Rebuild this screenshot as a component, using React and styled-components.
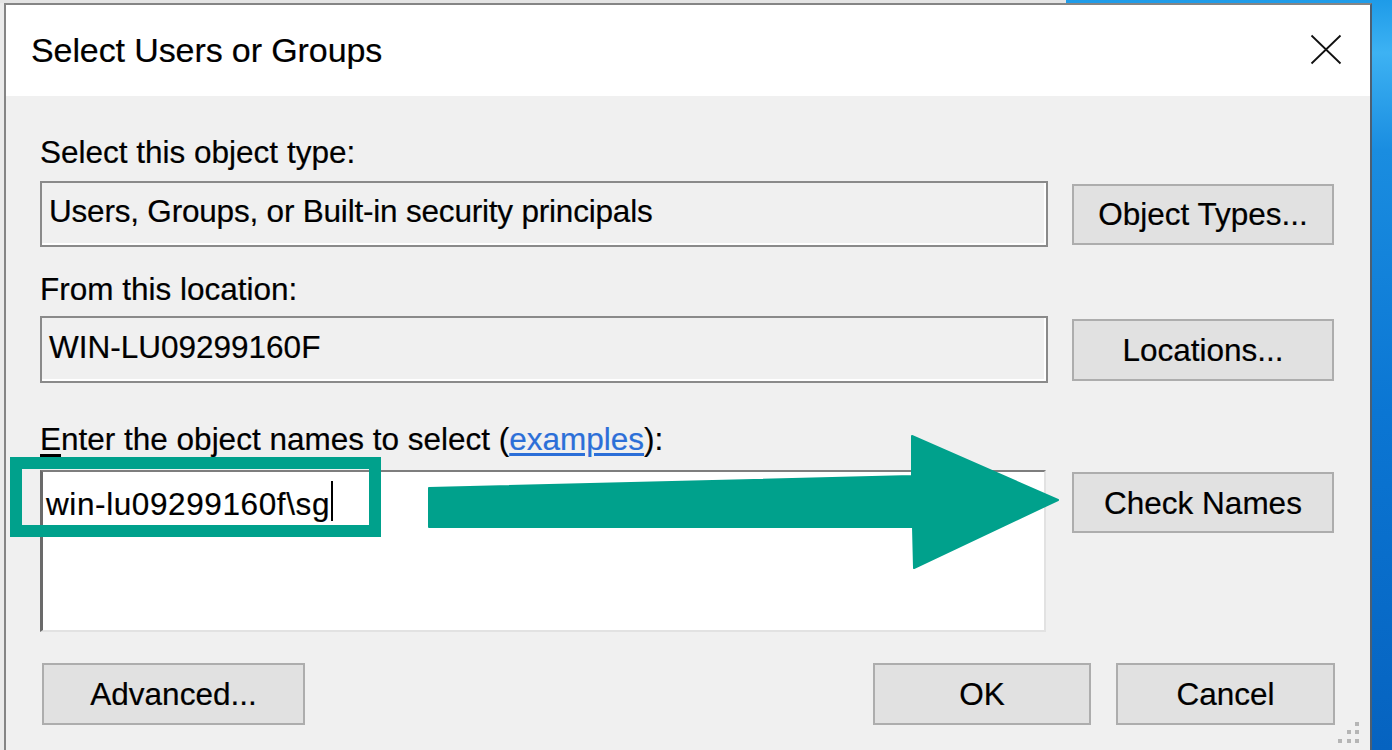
import React from 'react';
import styled, { createGlobalStyle } from 'styled-components';

const Global = createGlobalStyle`
  html, body { margin: 0; padding: 0; }
  body {
    width: 1392px;
    height: 750px;
    overflow: hidden;
    font-family: "Liberation Sans", Arial, sans-serif;
    color: #000;
  }
`;

const Page = styled.div`
  position: relative;
  width: 1392px;
  height: 750px;
  overflow: hidden;
  display: flex;
  flex-direction: column;
  background: linear-gradient(180deg, #1e9be8 0%, #3db2f3 7%, #1a8de0 20%, #0b76d3 55%, #0663c0 100%);
`;

const TopStrip = styled.div`
  display: flex;
  height: 3px;
  flex: none;
`;

const TopGrey = styled.div`
  width: 1066px;
  background: #e4e4e4;
`;

const Main = styled.div`
  flex: 1;
  display: flex;
  min-height: 0;
`;

const Gutter = styled.div`
  width: 4px;
  flex: none;
  background: #ebebeb;
`;

const Dialog = styled.div`
  position: relative;
  width: 1368px;
  flex: none;
  box-sizing: border-box;
  border: 2px solid #858585;
  border-bottom: none;
  border-right-color: #4d5f72;
  display: flex;
  flex-direction: column;
  background: #f0f0f0;
`;

const TitleBar = styled.div`
  height: 91px;
  flex: none;
  display: flex;
  align-items: center;
  justify-content: space-between;
  padding: 0 28px 0 25px;
  background: #fff;
`;

const Title = styled.div`
  font-size: 34px;
  line-height: 39px;
  letter-spacing: -0.1px;
  -webkit-text-stroke: 0.2px #000;
`;

const CloseIcon = styled.svg`
  width: 32px;
  height: 31px;
  margin-top: -3px;
  display: block;
`;

const Body = styled.div`
  flex: 1;
  padding: 38px 36px 0 34px;
  font-size: 31.5px;
  line-height: 36px;
  -webkit-text-stroke: 0.2px #000;
`;

const Label = styled.div`
  margin-top: ${p => p.$mt || 0}px;
  white-space: nowrap;
`;

const Accel = styled.span`
  text-decoration: underline;
  text-underline-offset: 4px;
`;

const Link = styled.span`
  color: #2c6fd8;
  -webkit-text-stroke: 0.2px #2c6fd8;
  text-decoration: underline;
  text-underline-offset: 3px;
`;

const FieldRow = styled.div`
  display: flex;
  align-items: ${p => p.$align || 'center'};
  gap: 24px;
  margin-top: ${p => p.$mt || 0}px;
`;

const ReadOnlyBox = styled.div`
  box-sizing: border-box;
  width: 1008px;
  height: ${p => p.$h}px;
  border: 2px solid #8a8a8a;
  box-shadow: inset -2px -2px 0 #ffffff;
  background: #f0f0f0;
  padding: ${p => p.$pt}px 7px 0 7px;
  letter-spacing: ${p => p.$ls || 0}px;
  white-space: nowrap;
`;

const NamesBox = styled.div`
  box-sizing: border-box;
  width: 1006px;
  height: 162px;
  background: #fff;
  border-top: 2px solid #7e7e7e;
  border-left: 3px solid #6a6a6a;
  border-right: 2px solid #e2e2e2;
  border-bottom: 2px solid #e2e2e2;
  padding: 9px 4px 0 3px;
  letter-spacing: 0.6px;
  white-space: nowrap;
`;

const Caret = styled.span`
  display: inline-block;
  width: 2px;
  height: 40px;
  background: #000;
  vertical-align: -6px;
  margin-left: 1px;
`;

const Button = styled.button`
  box-sizing: border-box;
  width: ${p => p.$w}px;
  height: ${p => p.$h || 61}px;
  margin-top: ${p => p.$mt || 0}px;
  margin-left: ${p => p.$ml || 0}px;
  flex: none;
  padding: 0;
  background: #e1e1e1;
  border: 2px solid #adadad;
  border-radius: 0;
  font-family: inherit;
  font-size: 31.5px;
  line-height: 36px;
  color: #000;
  -webkit-text-stroke: 0.2px #000;
  display: flex;
  align-items: center;
  justify-content: center;
`;

const Footer = styled.div`
  display: flex;
  align-items: center;
  margin-top: 31px;
`;

const Spacer = styled.div`
  flex: 1;
`;

const ButtonGroup = styled.div`
  display: flex;
  gap: 25px;
  margin-right: -1px;
`;

const Grip = styled.svg`
  position: absolute;
  right: 9px;
  bottom: 4px;
  width: 24px;
  height: 24px;
`;

const Highlight = styled.div`
  position: absolute;
  left: 10px;
  top: 457px;
  width: 371px;
  height: 80px;
  box-sizing: border-box;
  border: 12px solid #00a18c;
  pointer-events: none;
`;

const ArrowOverlay = styled.svg`
  position: absolute;
  left: 0;
  top: 0;
  width: 1392px;
  height: 750px;
  pointer-events: none;
`;

export default function App() {
  return (
    <>
      <Global />
      <Page>
        <TopStrip>
          <TopGrey />
        </TopStrip>
        <Main>
          <Gutter />
          <Dialog>
            <TitleBar>
              <Title>Select Users or Groups</Title>
              <CloseIcon viewBox="0 0 32 31">
                <path d="M1.5 1.5 L30.5 29.5 M30.5 1.5 L1.5 29.5" stroke="#111" strokeWidth="1.8" fill="none" />
              </CloseIcon>
            </TitleBar>
            <Body>
              <Label>Select this object type:</Label>
              <FieldRow $mt={11}>
                <ReadOnlyBox $h={66} $pt={10} $ls={-0.2}>Users, Groups, or Built-in security principals</ReadOnlyBox>
                <Button $w={262} $h={61}>Object Types...</Button>
              </FieldRow>

              <Label $mt={24}>From this location:</Label>
              <FieldRow $mt={9}>
                <ReadOnlyBox $h={67} $pt={11}>WIN-LU09299160F</ReadOnlyBox>
                <Button $w={262} $h={62}>Locations...</Button>
              </FieldRow>

              <Label $mt={38}>
                <Accel>E</Accel>nter the object names to select (<Link>examples</Link>):
              </Label>
              <FieldRow $mt={13} $align="flex-start">
                <NamesBox>
                  win-lu09299160f\sg<Caret />
                </NamesBox>
                <Button $w={262} $h={61} $mt={2} $ml={2}>Check Names</Button>
              </FieldRow>

              <Footer>
                <Button $w={263} $h={62} $ml={2}>Advanced...</Button>
                <Spacer />
                <ButtonGroup>
                  <Button $w={218} $h={62}>OK</Button>
                  <Button $w={219} $h={62}>Cancel</Button>
                </ButtonGroup>
              </Footer>
            </Body>
            <Grip viewBox="0 0 24 24">
              <g fill="#b5b5b5">
                <rect x="18" y="0" width="4" height="4" />
                <rect x="10" y="8" width="4" height="4" />
                <rect x="18" y="8" width="4" height="4" />
                <rect x="1" y="17" width="4" height="4" />
                <rect x="10" y="17" width="4" height="4" />
                <rect x="18" y="17" width="4" height="4" />
              </g>
            </Grip>
          </Dialog>
        </Main>
        <Highlight />
        <ArrowOverlay viewBox="0 0 1392 750">
          <polygon
            points="429,488 912,476 912,436 1058,500 914,568 913,527 429,527"
            fill="#00a18c"
            stroke="#00a18c"
            strokeWidth="2"
            strokeLinejoin="round"
          />
        </ArrowOverlay>
      </Page>
    </>
  );
}
